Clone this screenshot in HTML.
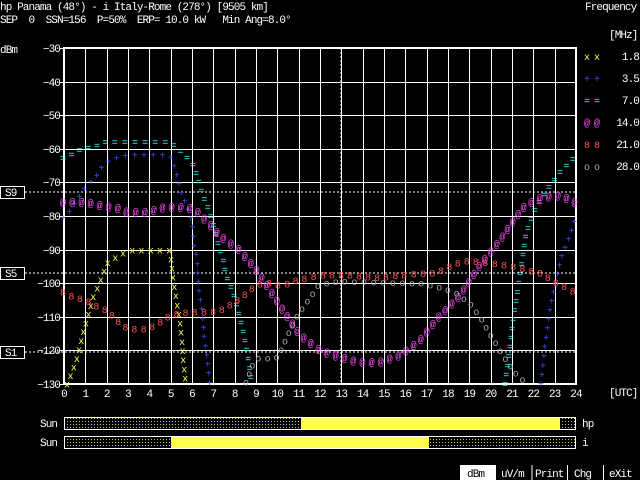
<!DOCTYPE html>
<html><head><meta charset="utf-8"><style>
html,body{margin:0;padding:0;background:#000;width:640px;height:480px;overflow:hidden}
svg{display:block}
text{font-family:"Liberation Mono",monospace;font-size:11px;fill:#fff;letter-spacing:-0.9px;white-space:pre}
.m{font-size:10px;letter-spacing:0}
</style></head><body>
<svg id="s" width="640" height="480" viewBox="0 0 640 480" xmlns="http://www.w3.org/2000/svg" xml:space="preserve">
<defs>
<pattern id="dots" width="3" height="3" patternUnits="userSpaceOnUse"><rect width="3" height="3" fill="#000"/><rect x="1" y="1" width="1" height="1" fill="#c8c860"/></pattern>
</defs>
<text x="0" y="10">hp Panama (48°) - i Italy-Rome (278°) [9505 km]</text>
<text x="0" y="23">SEP  0  SSN=156  P=50%  ERP= 10.0 kW   Min Ang=8.0°</text>
<text x="585" y="10">Frequency</text>
<text x="609" y="38">[MHz]</text>
<text x="0" y="53">dBm</text>
<g id="grid" stroke="#fff" stroke-width="1"></g>
<g id="lab"></g>
<line x1="341" y1="48" x2="341" y2="384" stroke="#fff" stroke-dasharray="2,2"/>
<g stroke="#fff" stroke-dasharray="2,2">
<line x1="25" y1="192" x2="576" y2="192"/>
<line x1="25" y1="273" x2="576" y2="273"/>
<line x1="25" y1="352" x2="576" y2="352"/>
</g>
<g stroke="#fff" fill="#000">
<rect x="0.5" y="186.5" width="24" height="12"/>
<rect x="0.5" y="267.5" width="24" height="12"/>
<rect x="0.5" y="346.5" width="24" height="12"/>
</g>
<text x="5" y="196">S9</text><text x="5" y="277">S5</text><text x="5" y="356">S1</text>
<rect x="64" y="48" width="512" height="336" fill="none" stroke="#fff" stroke-width="2"/>
<g id="pts"></g>
<text x="609" y="396">[UTC]</text>
<rect x="64.5" y="417.5" width="511" height="12" fill="url(#dots)" stroke="#fff"/>
<rect x="301" y="418" width="259" height="11" fill="#ffff50"/>
<rect x="64.5" y="436.5" width="511" height="12" fill="url(#dots)" stroke="#fff"/>
<rect x="171" y="437" width="258" height="11" fill="#ffff50"/>
<text x="40" y="427">Sun</text><text x="582" y="427">hp</text>
<text x="40" y="446">Sun</text><text x="582" y="446">i</text>
<rect x="460" y="465" width="36" height="15" fill="#fff"/>
<g stroke="#fff"><line x1="532" y1="465" x2="532" y2="480"/><line x1="567.5" y1="465" x2="567.5" y2="480"/><line x1="603.5" y1="465" x2="603.5" y2="480"/></g>
<text x="467" y="477" style="fill:#000">dBm</text>
<text x="501" y="477">uV/m</text>
<text x="535" y="477">Print</text>
<text x="574" y="477">Chg</text>
<text x="609" y="477">eXit</text>
</svg>
<script>
var NS="http://www.w3.org/2000/svg",s=document.getElementById('s');
function el(p,n,a,t){var e=document.createElementNS(NS,n);for(var k in a)e.setAttribute(k,a[k]);if(t!=null)e.textContent=t;p.appendChild(e);return e;}
var g=document.getElementById('grid'),lab=document.getElementById('lab');
for(var i=1;i<24;i++){var x=Math.round(64+i*512/24)+0.5;el(g,'line',{x1:x,y1:48,x2:x,y2:384});}
for(var j=1;j<10;j++){var y=Math.round(48+j*33.6)+0.5;el(g,'line',{x1:64,y1:y,x2:576,y2:y});}
for(var j=0;j<=10;j++){var y=Math.round(48+j*33.6);el(lab,'text',{x:60,y:y+4,'text-anchor':'end'},'\u2212'+(30+j*10));el(g,'line',{x1:60,y1:y+.5,x2:64,y2:y+.5});}
for(var i=0;i<=24;i++){var x=64+i*512/24;el(lab,'text',{x:x,y:397,'text-anchor':'middle'},''+i);}
var series=[
{c:'#ffff50',ch:'x',p:[[67,384],[72,372],[77,358],[83,333],[88,316],[93,297],[100,282],[107,263],[113,259],[121,254],[128,250],[170,250],[171,259],[173,277],[177,303],[180,322],[182,340],[183,357],[186,384]]},
{c:'#4848ff',ch:'+',p:[[63,218],[69,212],[79,197],[85,188],[91,182],[97,175],[101,168],[107,162],[117,158],[128,155],[170,155],[173,163],[176,172],[178,180],[180,188],[183,197],[187,207],[189,213],[192,222],[193,232],[194,248],[197,258],[198,275],[199,293],[201,303],[203,320],[204,337],[207,357],[210,384]]},
{c:'#4848ff',ch:'+',p:[[541,384],[545,345],[550,310],[556,280],[560,262],[566,245],[570,236],[576,215]]},
{c:'#40ffff',ch:'=',p:[[63,158],[71,155],[77,151],[85,148],[96,146],[106,142],[169,142],[178,148],[184,155],[192,162],[195,170],[198,179],[200,187],[203,195],[207,205],[210,213],[215,230],[219,248],[223,258],[226,275],[233,292],[238,310],[243,330],[248,358],[252,384]]},
{c:'#40ffff',ch:'=',p:[[505,384],[509,355],[513,320],[517,295],[521,268],[526,233],[536,207],[549,187],[560,172],[574,158]]},
{c:'#ff50ff',ch:'@',p:[[63,202],[85,202],[95,204],[106,206],[117,208],[128,212],[148,212],[160,208],[169,207],[180,207],[191,208],[199,213],[206,220],[212,226],[220,236],[240,250],[255,268],[270,290],[285,313],[300,335],[320,350],[340,357],[360,362],[380,362],[400,355],[420,340],[440,315],[460,295],[480,265],[500,240],[515,218],[525,205],[540,198],[555,195],[565,197],[576,203]]},
{c:'#ff5050',ch:'8',p:[[63,292],[74,297],[85,300],[92,303],[98,307],[107,310],[113,316],[120,323],[128,329],[148,329],[155,325],[162,321],[169,316],[180,313],[191,312],[212,312],[223,309],[239,299],[255,286],[265,282],[283,286],[297,280],[320,275],[350,275],[380,278],[400,275],[436,273],[457,263],[468,261],[500,264],[520,268],[540,273],[555,282],[575,292]]},
{c:'#a8a8a8',ch:'o',p:[[246,382],[252,366],[255,358],[276,358],[281,350],[289,332],[298,314],[308,300],[319,284],[340,281],[380,282],[420,283],[435,286],[454,291],[470,303],[481,318],[489,332],[497,345],[509,364],[518,376],[526,382]]}
];
var pts=document.getElementById('pts');
series.forEach(function(S){
  var lx=-99,ly=-99;
  for(var k=0;k<S.p.length-1;k++){var a=S.p[k],b=S.p[k+1];
    for(var t=0;t<1;t+=0.02){var x=a[0]+(b[0]-a[0])*t,y=a[1]+(b[1]-a[1])*t;
      if(Math.hypot(x-lx,y-ly)>=9){lx=x;ly=y;if(y<=385)el(pts,'text',{x:x.toFixed(1),y:(y+3.5).toFixed(1),'text-anchor':'middle',class:'m',style:'fill:'+S.c},S.ch);}}}
});
var leg=[['#ffff50','x','1.8'],['#4848ff','+','3.5'],['#40ffff','=','7.0'],['#ff50ff','@','14.0'],['#ff5050','8','21.0'],['#a8a8a8','o','28.0']];
leg.forEach(function(L,i){var y=60+i*22;
  el(s,'text',{x:587,y:y,'text-anchor':'middle',class:'m',style:'fill:'+L[0]},L[1]);
  el(s,'text',{x:597,y:y,'text-anchor':'middle',class:'m',style:'fill:'+L[0]},L[1]);
  el(s,'text',{x:639,y:y,'text-anchor':'end'},L[2]);});
</script>
</body></html>
